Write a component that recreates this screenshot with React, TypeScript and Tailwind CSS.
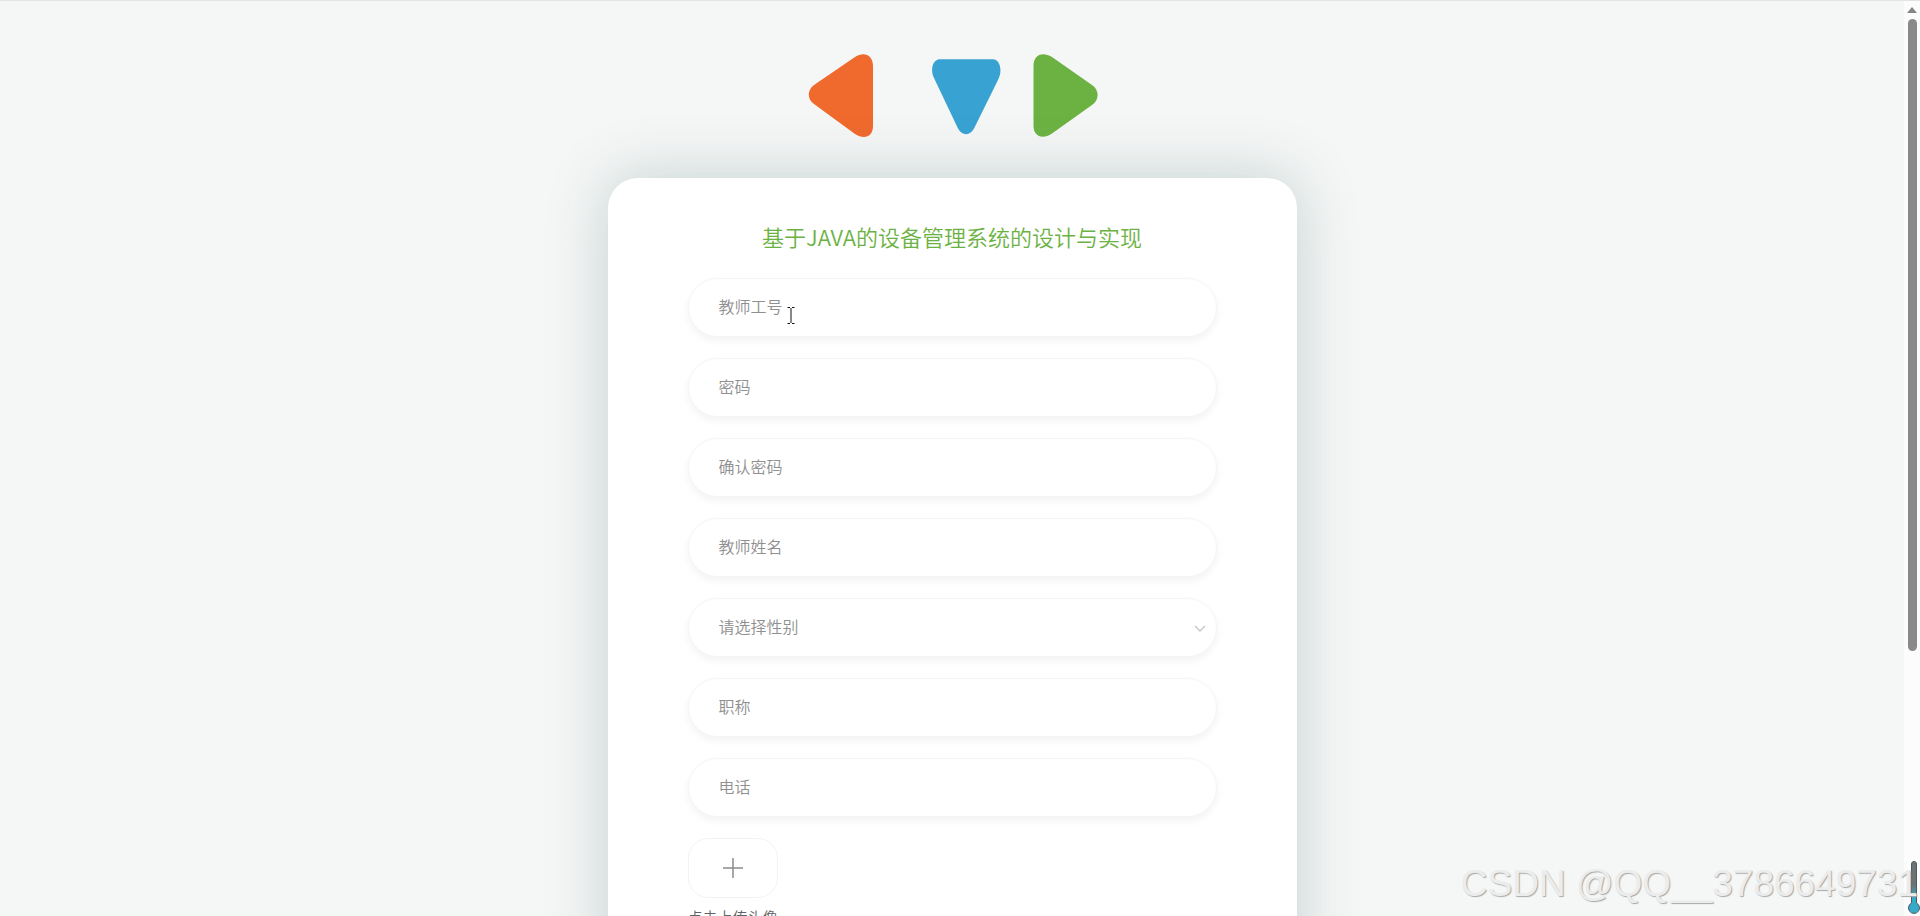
const fieldBase =
  "block h-[59px] w-full rounded-[30px] border border-[#f5f5f5] bg-white px-[30px] pb-[3px] text-base font-[350] text-[#8f8f8f] shadow-[0_4px_9px_rgba(0,0,0,0.05)] outline-none placeholder:text-[#8f8f8f] placeholder:opacity-100";

function Field({ label, type = "text" }: { label: string; type?: string }) {
  return <input type={type} aria-label={label} placeholder={label} className={fieldBase} />;
}

function Logo() {
  return (
    <svg viewBox="0 0 292 84" className="h-[84px] w-[292px] shrink-0" aria-hidden="true">
      <path d="M8 31L49 3C58-3 67 1 67 12V72C67 83 58 86 49 80L8 50C1 45 1 36 8 31Z" fill="#f0692d" />
      <path d="M134 5.300H187C194 5.300 197 17 192 26L168 74.500C164 82 156 82 152 74.500L128 24C124 15 127 5.300 134 5.300Z" fill="#38a2d2" />
      <path d="M227.500 12C227.500 1 236-3 246 3L286 31C293.500 36 293.500 46 286 51L246 79.500C236 86 227.500 82 227.500 72Z" fill="#6cb243" />
    </svg>
  );
}

function ScrollBar() {
  return (
    <div aria-hidden="true" className="flex w-4 shrink-0 flex-col items-center bg-[#fcfcfc] pt-[6px]">
      <svg viewBox="0 0 10 6" className="h-[6px] w-[10px]">
        <path d="M5 0L10 6H0Z" fill="#858585" />
      </svg>
      <div className="mt-[6px] h-[632px] w-[9px] rounded-full bg-[#898989]" />
    </div>
  );
}

export default function App() {
  return (
    <div className="relative flex h-screen overflow-hidden border-t border-[#e4e4e4] bg-[#f5f6f6] font-['Noto_Sans_CJK_SC',sans-serif]">
      <main className="flex min-w-0 flex-1 flex-col items-center overflow-hidden pt-[53px]">
        <Logo />
        <form className="mt-[40px] w-full max-w-[689px] shrink-0 rounded-[30px] bg-white px-[80px] pt-[42px] pb-20 shadow-[0_0_60px_rgba(50,110,95,0.26)]">
          <h1 className="text-center text-[22px] leading-[32px] font-[350] text-[#6cb243]">基于JAVA的设备管理系统的设计与实现</h1>
          <div className="mt-[26px] flex flex-col gap-[21px]">
            <Field label="教师工号" />
            <Field label="密码" type="password" />
            <Field label="确认密码" type="password" />
            <Field label="教师姓名" />
            <div className="relative">
              <select aria-label="请选择性别" className={`${fieldBase} appearance-none`}>
                <option>请选择性别</option>
                <option>男</option>
                <option>女</option>
              </select>
              <svg viewBox="0 0 12 8" className="pointer-events-none absolute top-[27px] right-[11px] h-2 w-3" aria-hidden="true">
                <path d="M1 1L6 6L11 1" fill="none" stroke="#c8cace" strokeWidth="1.5" />
              </svg>
            </div>
            <Field label="职称" />
            <Field label="电话" />
          </div>
          <div className="mt-[21px] flex w-[90px] flex-col items-center">
            <button
              type="button"
              aria-label="上传头像"
              className="flex h-[60px] w-full items-center justify-center rounded-[20px] border border-[#f3f3f3] bg-white"
            >
              <svg viewBox="0 0 20 20" className="h-5 w-5" aria-hidden="true">
                <path d="M10 0V20M0 10H20" stroke="#8c8c8c" strokeWidth="1.5" />
              </svg>
            </button>
            <p className="mt-[8px] text-[15px] leading-[22px] font-[350] whitespace-nowrap text-[#606266]">点击上传头像</p>
          </div>
        </form>
      </main>
      <ScrollBar />
      <svg viewBox="0 0 14 56" className="absolute right-0 bottom-0 h-14 w-[14px]" aria-hidden="true">
        <defs>
          <linearGradient id="tube" x1="0" y1="0" x2="0" y2="1">
            <stop offset="0.45" stopColor="#6b7375" />
            <stop offset="0.7" stopColor="#35aac9" />
          </linearGradient>
        </defs>
        <path d="M5.500 43V4a2.500 2.500 0 0 1 5 0V43a5.500 5.500 0 1 1-5 0Z" fill="url(#tube)" stroke="#4e5a60" />
      </svg>
      <p className="absolute right-[2px] bottom-[12px] font-['Liberation_Sans',sans-serif] text-[37px] leading-[40px] text-[#ececec] [text-shadow:1px_1px_1px_#a8a8a8]">
        CSDN @QQ__3786649731
      </p>
      <svg viewBox="0 0 8 17" className="absolute top-[306px] left-[787px] h-[17px] w-2" aria-hidden="true">
        <path d="M0.500 0.500H3M5 0.500H7.500M4 1V16M0.500 16.500H3M5 16.500H7.500" stroke="#111" />
      </svg>
    </div>
  );
}
